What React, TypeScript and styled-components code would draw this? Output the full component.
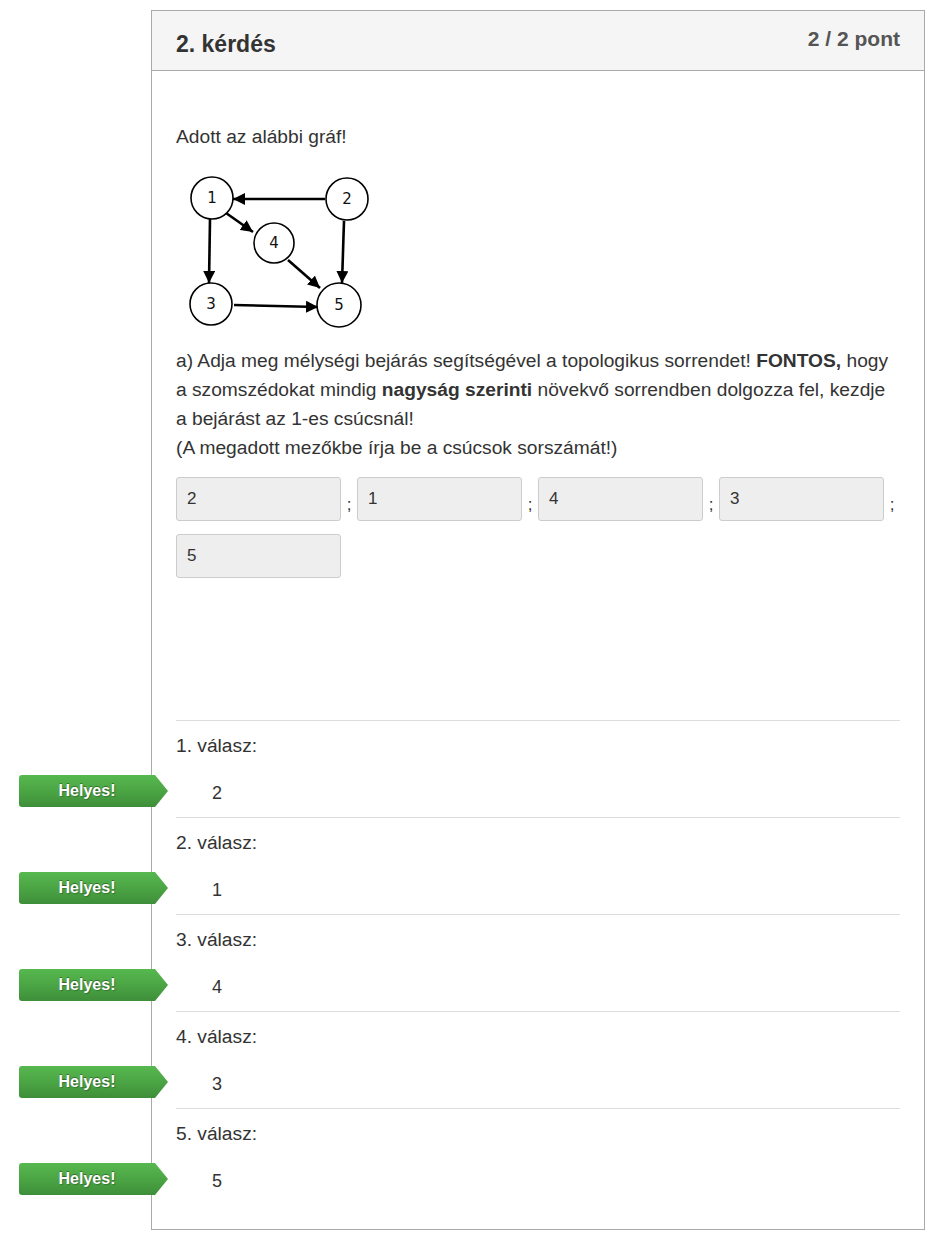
import React from 'react'
import styled, { createGlobalStyle } from 'styled-components'

const GlobalStyle = createGlobalStyle`
	body {
		margin: 0;
		background: #fff;
		font-family: "Liberation Sans", Arial, sans-serif;
		color: #333;
	}
`

const Page = styled.div`
	padding: 10px 0 12px 151px;
`

const Panel = styled.div`
	width: 774px;
	box-sizing: border-box;
	border: 1px solid #aaa;
	background: #fff;
`

const PanelHeader = styled.div`
	display: flex;
	justify-content: space-between;
	align-items: flex-start;
	background: #f5f5f5;
	border-bottom: 1px solid #aaa;
	padding: 20px 24px 13px;
`

const Title = styled.h3`
	margin: 0;
	font-size: 23px;
	font-weight: bold;
	line-height: 26px;
	color: #333;
`

const Points = styled.div`
	font-size: 21px;
	font-weight: bold;
	line-height: 16px;
	color: #555;
`

const PanelBody = styled.div`
	padding: 51px 24px 24px;
	font-size: 19.2px;
	line-height: 29px;
`

const Text = styled.p`
	margin: 0;
`

const GraphBox = styled.div`
	margin-top: 13px;
	height: 182px;
`

const Inputs = styled.div`
	display: flex;
	flex-wrap: wrap;
	row-gap: 13px;
	margin-top: 15px;
`

const Pair = styled.div`
	display: flex;
`

const Field = styled.div`
	width: 165px;
	height: 44px;
	box-sizing: border-box;
	background: #eee;
	border: 1px solid #ccc;
	border-radius: 3px;
	padding-left: 10px;
	font-size: 17px;
	line-height: 42px;
	color: #333;
`

const Sep = styled.span`
	width: 16px;
	text-align: center;
	font-size: 17px;
	line-height: 20px;
	align-self: flex-end;
	padding-bottom: 6px;
	color: #333;
`

const Answers = styled.div`
	margin-top: 142px;
`

const Answer = styled.div`
	border-top: 1px solid #ddd;
	padding-top: 12px;
`

const AnswerLabel = styled.div`
	line-height: 26px;
`

const AnswerValue = styled.div`
	position: relative;
	margin-top: 10px;
	height: 48px;
	line-height: 48px;
	padding-left: 36px;
	font-size: 18px;
`

const Badge = styled.div`
	position: absolute;
	left: -157px;
	top: 6px;
	width: 149px;
	height: 32px;
	border-radius: 3px 0 0 3px;
	background: linear-gradient(to bottom, #57b84f 0%, #4aa343 55%, #3e8e39 100%);
	clip-path: polygon(0 0, 136px 0, 100% 50%, 136px 100%, 0 100%);
	box-sizing: border-box;
	padding-right: 13px;
	text-align: center;
	color: #fff;
	font-size: 16px;
	font-weight: bold;
	line-height: 31px;
	text-shadow: 0 -1px 0 rgba(0, 0, 0, 0.35), 1px 1px 1px rgba(0, 0, 0, 0.25);
`

const nodes = [
	{ id: 1, x: 36, y: 34, r: 21 },
	{ id: 2, x: 171, y: 35, r: 21 },
	{ id: 4, x: 98, y: 79, r: 20 },
	{ id: 3, x: 35, y: 140, r: 21 },
	{ id: 5, x: 163, y: 141, r: 22 },
]

const edges = [
	[149, 35, 57, 35],
	[50, 49, 77, 68],
	[34, 55, 33, 119],
	[168, 57, 166, 119],
	[112, 96, 144, 124],
	[58, 141, 142, 143],
]

const Graph = () => (
	<svg width="200" height="180" viewBox="0 0 200 180">
		<defs>
			<marker id="head" markerUnits="userSpaceOnUse" markerWidth="14" markerHeight="12" refX="12" refY="6" orient="auto">
				<path d="M0,0 L12,6 L0,12 Z" fill="#000" />
			</marker>
		</defs>
		{edges.map((e, i) => (
			<line key={i} x1={e[0]} y1={e[1]} x2={e[2]} y2={e[3]} stroke="#000" strokeWidth="2.6" markerEnd="url(#head)" />
		))}
		{nodes.map(n => (
			<g key={n.id}>
				<circle cx={n.x} cy={n.y} r={n.r} fill="#fff" stroke="#000" strokeWidth="1.6" />
				<text x={n.x} y={n.y + 5} textAnchor="middle" fontSize="15" fontFamily="'DejaVu Sans', sans-serif" fill="#111">{n.id}</text>
			</g>
		))}
	</svg>
)

const values = ['2', '1', '4', '3', '5']

const App = () => {
	return (
		<Page>
			<GlobalStyle />
			<Panel>
				<PanelHeader>
					<Title>2. kérdés</Title>
					<Points>2 / 2 pont</Points>
				</PanelHeader>
				<PanelBody>
					<Text>Adott az alábbi gráf!</Text>
					<GraphBox>
						<Graph />
					</GraphBox>
					<Text>
						a) Adja meg mélységi bejárás segítségével a topologikus sorrendet! <b>FONTOS,</b> hogy<br />
						a szomszédokat mindig <b>nagyság szerinti</b> növekvő sorrendben dolgozza fel, kezdje<br />
						a bejárást az 1-es csúcsnál!<br />
						(A megadott mezőkbe írja be a csúcsok sorszámát!)
					</Text>
					<Inputs>
						{values.map((v, i) => (
							<Pair key={i}>
								<Field>{v}</Field>
								{i < values.length - 1 && <Sep>;</Sep>}
							</Pair>
						))}
					</Inputs>
					<Answers>
						{values.map((v, i) => (
							<Answer key={i}>
								<AnswerLabel>{i + 1}. válasz:</AnswerLabel>
								<AnswerValue>
									<Badge>Helyes!</Badge>
									{v}
								</AnswerValue>
							</Answer>
						))}
					</Answers>
				</PanelBody>
			</Panel>
		</Page>
	)
}

export default App
